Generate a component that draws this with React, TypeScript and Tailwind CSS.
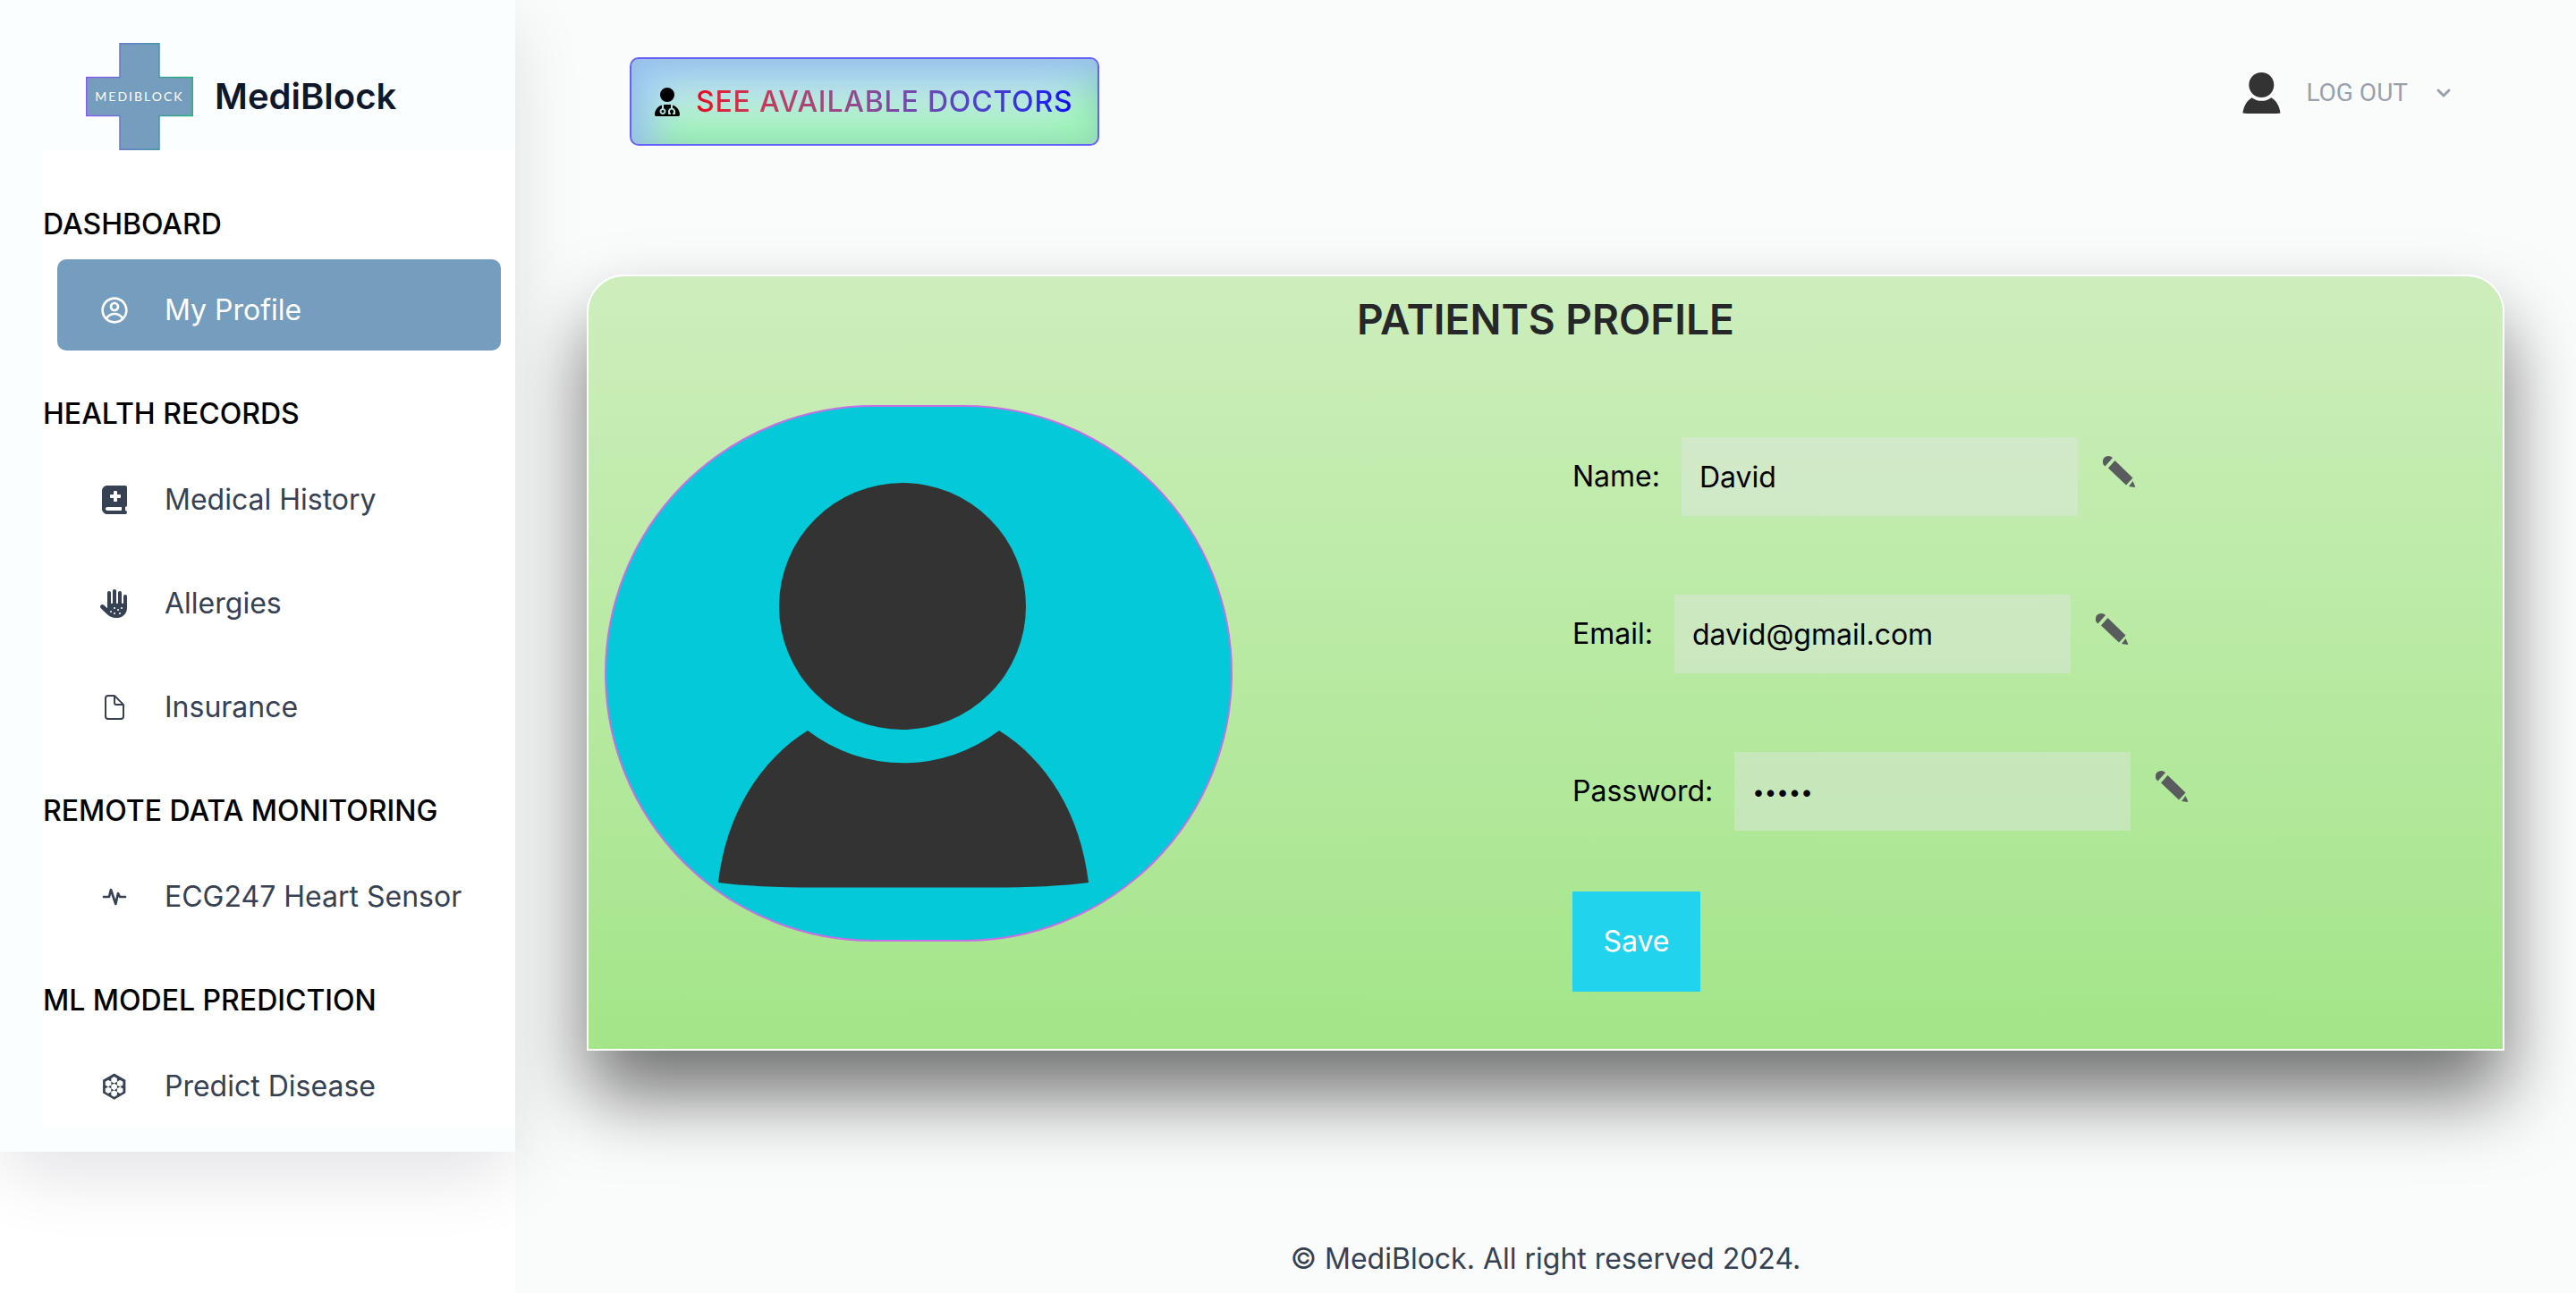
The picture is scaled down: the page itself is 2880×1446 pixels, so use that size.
import { useState } from "react";
import type { ComponentType } from "react";
import { CgProfile } from "react-icons/cg";
import { FaBookMedical, FaHandDots, FaUserDoctor } from "react-icons/fa6";
import { GiArtificialHive } from "react-icons/gi";
import { IoDocumentOutline } from "react-icons/io5";
import { TbActivityHeartbeat, TbChevronDown } from "react-icons/tb";

type NavItem = { label: string; icon: ComponentType<{ className?: string }>; active?: boolean };
type NavSection = { title: string; items: NavItem[] };

const sections: NavSection[] = [
  { title: "DASHBOARD", items: [{ label: "My Profile", icon: CgProfile, active: true }] },
  {
    title: "HEALTH RECORDS",
    items: [
      { label: "Medical History", icon: FaBookMedical },
      { label: "Allergies", icon: FaHandDots },
      { label: "Insurance", icon: IoDocumentOutline },
    ],
  },
  { title: "REMOTE DATA MONITORING", items: [{ label: "ECG247 Heart Sensor", icon: TbActivityHeartbeat }] },
  { title: "ML MODEL PREDICTION", items: [{ label: "Predict Disease", icon: GiArtificialHive }] },
];

function LogoMark() {
  return (
    <span className="relative flex h-[120px] w-[120px] items-center justify-center">
      <svg viewBox="0 0 120 120" className="absolute inset-0 h-full w-full" aria-hidden="true">
        <defs>
          <linearGradient id="logo-edge" x1="0" x2="1" y1="0" y2="0">
            <stop offset="0" stopColor="#8b5cf6" />
            <stop offset="1" stopColor="#22b573" />
          </linearGradient>
        </defs>
        <path
          d="M38 .75H82V38.5H119.25V81.5H82V119.25H38V81.5H.75V38.5H38Z"
          fill="#759dbd"
          stroke="url(#logo-edge)"
          strokeWidth="1.5"
        />
      </svg>
      <span className="relative font-['Lato',sans-serif] text-[14px] leading-4 tracking-[2px] text-white">MEDIBLOCK</span>
    </span>
  );
}

function PersonShape() {
  return (
    <g fill="#333333">
      <circle cx="333" cy="225" r="138" />
      <path d="M127 534C136 457 174 397 227 364A176 176 0 0 0 441 364C494 397 532 457 541 534Q500 539.500 430 539.500H238Q168 539.500 127 534Z" />
    </g>
  );
}

function PencilIcon() {
  return (
    <svg viewBox="0 0 36 36" className="h-9 w-9" fill="#595b5e" aria-hidden="true">
      <path d="M1.500 11.500A7 7 0 0 1 1.500 2.800A7 7 0 0 1 11 3L2.500 12.500Z" />
      <path d="M13.500 6L33.500 25.500L26 33.500L6 14.500Z" />
      <path d="M33.500 29L36.500 36L29 35Z" />
    </svg>
  );
}

function Field({ id, label, type, initial }: { id: string; label: string; type: string; initial: string }) {
  const [value, setValue] = useState(initial);
  return (
    <div className="flex items-center">
      <label htmlFor={id} className="mr-6">
        {label}
      </label>
      <input
        id={id}
        type={type}
        value={value}
        onChange={(e) => setValue(e.target.value)}
        className={
          type === "password"
            ? "h-[88px] w-[443px] bg-gray-200/40 px-5 text-[24px] outline-none"
            : "h-[88px] w-[443px] bg-gray-200/40 px-5 outline-none"
        }
      />
      <button type="button" aria-label={"Edit " + id} className="mb-3 ml-7">
        <PencilIcon />
      </button>
    </div>
  );
}

function Sidebar() {
  return (
    <aside className="relative z-10 w-1/5 min-w-[560px] shrink-0 self-start bg-[#fbfeff] pb-7 pl-12 pt-12 shadow-[0_24px_80px_-8px_rgba(17,12,46,0.14)]">
      <a href="#home" className="flex items-center gap-6 pl-12">
        <LogoMark />
        <span className="text-[40px] font-semibold leading-[56px] text-slate-900">MediBlock</span>
      </a>
      <nav className="bg-white pt-3">
        {sections.map((section) => (
          <section key={section.title}>
            <h2 className="pb-4 pt-12 font-medium leading-[46px] text-black">{section.title}</h2>
            <ul className="flex flex-col gap-[14px] px-4">
              {section.items.map(({ label, icon: Icon, active }) => (
                <li key={label}>
                  <a
                    href={"#" + label.toLowerCase().replace(/ /g, "-")}
                    aria-current={active ? "page" : undefined}
                    className={
                      active
                        ? "flex h-[102px] items-center gap-10 rounded-[10px] bg-[#759dbd] pl-12 pt-3 text-white"
                        : "flex h-[102px] items-center gap-10 rounded-[10px] pl-12 pt-3 text-gray-700"
                    }
                  >
                    <Icon className="h-8 w-8 shrink-0" />
                    <span className="whitespace-nowrap">{label}</span>
                  </a>
                </li>
              ))}
            </ul>
          </section>
        ))}
      </nav>
    </aside>
  );
}

export default function App() {
  return (
    <div className="flex min-h-screen bg-white font-['Inter',sans-serif] text-[32px] leading-[48px] text-black">
      <Sidebar />
      <div className="flex min-w-0 flex-1 flex-col bg-[#fafcfb]">
        <header className="flex items-start justify-between pl-32 pr-[136px] pt-16">
          <button
            type="button"
            className="flex h-[99px] items-center gap-4 rounded-[10px] border-2 border-[#6560fa] bg-[#c4eee2] pl-6 pr-7 shadow-[inset_0_0_24px_rgba(130,130,180,0.2),inset_24px_28px_44px_#9cc8f2,inset_-24px_-28px_44px_#97f2b0]"
          >
            <FaUserDoctor className="h-8 w-8" />
            <span className="bg-linear-to-r from-[#e60020] to-[#1000f5] bg-clip-text font-medium tracking-wide text-transparent">
              SEE AVAILABLE DOCTORS
            </span>
          </button>
          <button type="button" className="flex h-20 items-center text-gray-400">
            <svg viewBox="127 87 415 453" className="h-[46px] w-[43px]" aria-hidden="true">
              <PersonShape />
            </svg>
            <span className="ml-7 font-['Roboto',sans-serif] text-[28px] leading-10">LOG OUT</span>
            <TbChevronDown className="ml-7 h-6 w-6" strokeWidth={3} />
          </button>
        </header>

        <main className="mx-20 mt-36 rounded-t-[42px] border-2 border-white bg-linear-to-b from-[#cdeebc] to-[#a3e588] pb-16 shadow-[0_50px_84px_rgba(0,0,0,0.55)]">
          <h1 className="mt-4 text-center text-[46px] font-semibold leading-[64px] text-[#252729]">PATIENTS PROFILE</h1>
          <div className="mt-16 grid grid-cols-2">
            <div className="ml-[18px] h-[600px] w-[702px] overflow-hidden rounded-full border-2 border-[#c770e6] bg-[#04c9d9]">
              <svg viewBox="2 2 698 596" className="h-full w-full" role="img" aria-label="Profile picture">
                <PersonShape />
              </svg>
            </div>
            <form className="flex flex-col items-start gap-[88px] pl-[30px] pt-9" onSubmit={(e) => e.preventDefault()}>
              <Field id="name" label="Name:" type="text" initial="David" />
              <Field id="email" label="Email:" type="email" initial="david@gmail.com" />
              <div className="flex flex-col items-start gap-[68px]">
                <Field id="password" label="Password:" type="password" initial="David" />
                <button type="submit" className="h-28 min-w-[143px] bg-[#22d3ee] px-8 text-white">
                  Save
                </button>
              </div>
            </form>
          </div>
        </main>

        <footer className="mt-auto pb-3.5 pt-[200px] text-center text-gray-700">© MediBlock. All right reserved 2024.</footer>
      </div>
    </div>
  );
}
